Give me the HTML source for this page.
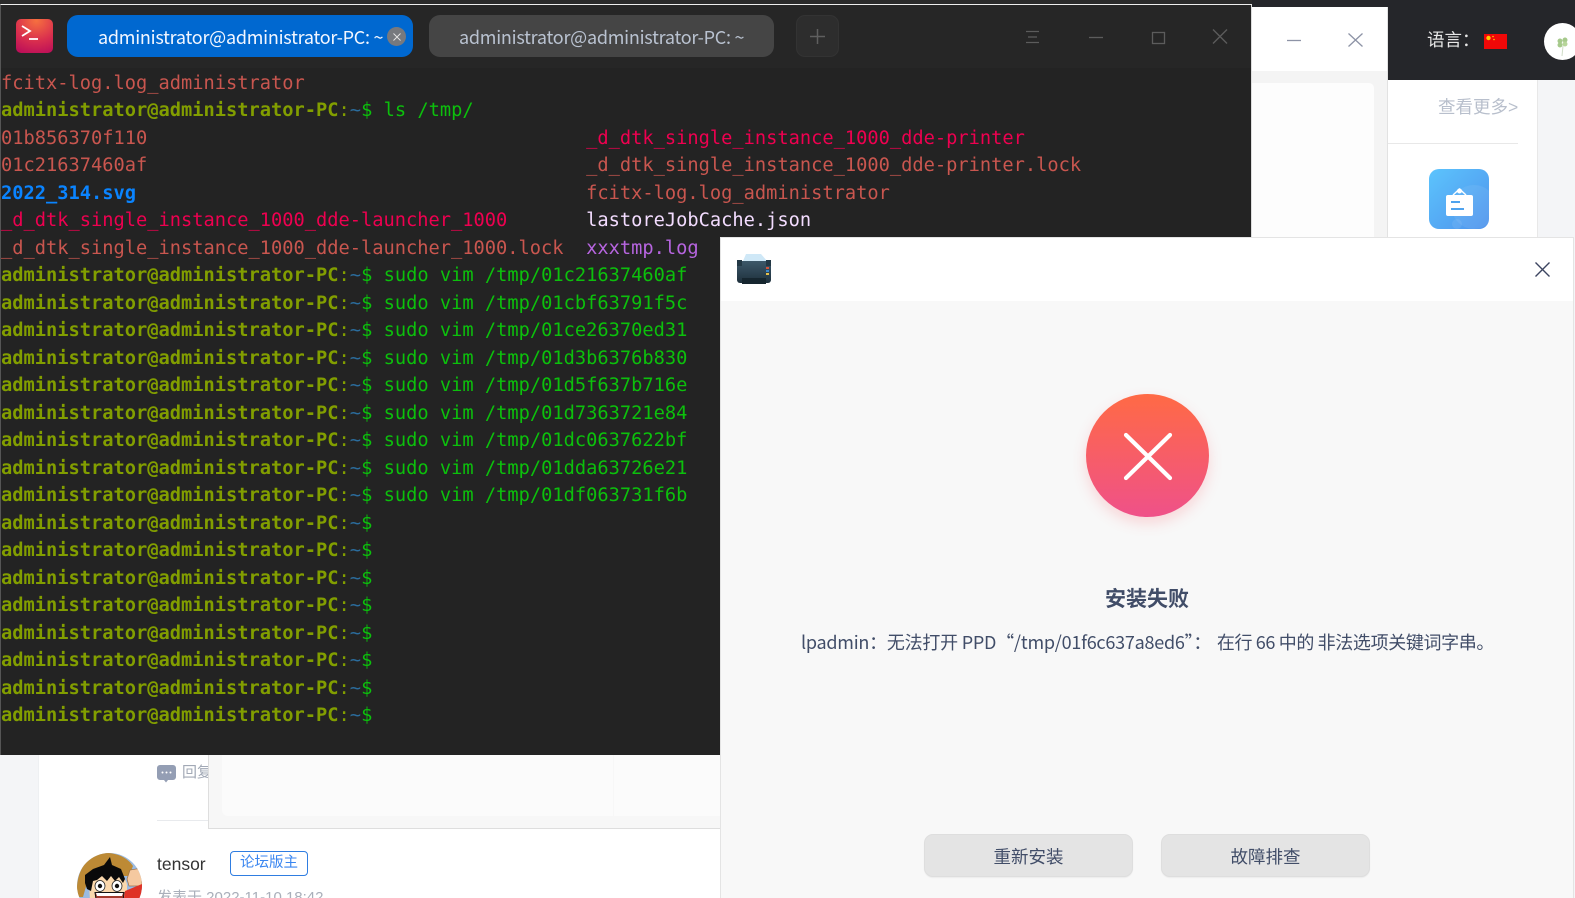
<!DOCTYPE html>
<html lang="zh"><head><meta charset="utf-8"><title>Screenshot</title>
<style>
html,body{margin:0;padding:0;width:1575px;height:898px;overflow:hidden;background:#f4f5f7}
body{position:relative;font-family:"Liberation Sans","Noto Sans CJK SC",sans-serif}
.a{position:absolute;display:block}
svg{position:absolute;display:block;overflow:visible}
pre{position:absolute;left:1px;top:70px;margin:0;font:18.7px/27.49px "DejaVu Sans Mono",monospace;white-space:pre;color:#0cc00c;z-index:1}
.u{color:#829e00;font-weight:bold}.h{color:#829e00}.t{color:#2b6c9c}
.r{color:#c9564f}.p{color:#ee0050}.b{color:#0a84ff;font-weight:bold}.w{color:#f3dcff}.v{color:#b765e0}
.tab{position:absolute;top:15px;height:42px;border-radius:11px;font:18px/44px "Noto Sans CJK SC",sans-serif;letter-spacing:-.25px;white-space:nowrap}
</style></head><body>
<!-- bottom page -->
<div class="a" style="left:38px;top:740px;width:700px;height:158px;background:#fff;border-left:1px solid #eef0f2"></div>
<div class="a" style="left:157px;top:820px;width:60px;height:1px;background:#e8eaed"></div>
<svg style="left:157px;top:765px" width="19" height="18" viewBox="0 0 19 18"><path d="M3 0h13a3 3 0 0 1 3 3v9a3 3 0 0 1-3 3h-5l-2 2.500-2-2.500H3a3 3 0 0 1-3-3V3a3 3 0 0 1 3-3z" fill="#949eb4"/><circle cx="5.500" cy="7.500" r="1" fill="#fff"/><circle cx="9.500" cy="7.500" r="1" fill="#fff"/><circle cx="13.500" cy="7.500" r="1" fill="#fff"/></svg>
<div class="a" style="left:182px;top:762px;width:26px;overflow:hidden;white-space:nowrap;font-size:15px;line-height:22px;color:#a2a9b6">回复</div>
<div class="a" style="left:208px;top:755px;width:512px;height:73px;background:#f7f7f7;border-left:1px solid #dedede;border-bottom:1px solid #dedede"></div>
<div class="a" style="left:222px;top:755px;width:391px;height:61px;background:#fbfbfb;border-radius:0 0 0 6px"></div>
<div class="a" style="left:614px;top:755px;width:106px;height:61px;background:#fbfbfb"></div>
<svg style="left:77px;top:853px" width="65" height="65" viewBox="0 0 65 65">
<defs><clipPath id="av"><circle cx="32.500" cy="32.500" r="32.500"/></clipPath></defs>
<g clip-path="url(#av)"><rect width="65" height="65" fill="#9bbbe2"/>
<path d="M0 36C0 20 8 6 20 1c12-3 28 0 36 12l-4 10H12L6 44H0z" fill="#bd8a35"/>
<path d="M12 30c2-6 10-10 20-10s17 4 18 12v33H14z" fill="#fad8ad"/>
<path d="M8 22l8-6 11-4 6-8 2 8 9 4 4 10-2 4-4-6-4 4-4-5-4 5-5-5-5 4-4 1-2 10-4-2-2-6z" fill="#0a0a0a"/>
<ellipse cx="23" cy="33" rx="5" ry="5.500" fill="#fff" stroke="#222" stroke-width=".8"/><circle cx="23" cy="33" r="2.200" fill="#111"/>
<ellipse cx="40" cy="33" rx="5" ry="5.500" fill="#fff" stroke="#222" stroke-width=".8"/><circle cx="40" cy="33" r="2.200" fill="#111"/>
<path d="M18 39.500h29l-3 26H22z" fill="#a33a2e" stroke="#111"/><path d="M19 40h27l-1 3H20z" fill="#fff"/><path d="M24 52h17l-2 13H26z" fill="#e05b50"/>
<path d="M50 26l3-9 12-2v18l-13 0z" fill="#f5c9a0" stroke="#9b6f45" stroke-width=".7"/>
<path d="M48 38l17-7v34H44z" fill="#df3226"/></g></svg>
<div class="a" style="left:157px;top:852px;font-size:17.5px;line-height:24px;color:#333">tensor</div>
<div class="a" style="left:230px;top:851px;width:76px;height:23px;border:1px solid #2f7de1;border-radius:4px;text-align:center;font-size:14.5px;line-height:23px;color:#3a86f0">论坛版主</div>
<div class="a" style="left:157px;top:890px;font-size:15px;line-height:16px;color:#a9afba;white-space:nowrap">发表于 2022-11-10 18:42</div>

<!-- top-right background -->
<div class="a" style="left:0;top:0;width:1575px;height:80px;background:#25262a"></div>
<div class="a" style="left:0;top:0;width:1252px;height:5px;background:#2a2a2a"></div>
<div class="a" style="left:1388px;top:80px;width:149px;height:157px;background:#fff;border-right:1px solid #e8e8e8"></div>
<div class="a" style="left:1427px;top:28px;font-size:17.5px;line-height:24px;color:#e8e8e8">语言：</div>
<svg style="left:1484px;top:34px" width="23" height="15" viewBox="0 0 23 15"><rect width="23" height="15" fill="#f00808"/><circle cx="4.500" cy="4" r="2.200" fill="#fc0"/><circle cx="9" cy="2.500" r=".8" fill="#fc0"/><circle cx="10" cy="5.500" r=".8" fill="#fc0"/></svg>
<svg style="left:1544px;top:23px" width="37" height="37" viewBox="0 0 37 37"><circle cx="18.500" cy="18.500" r="18.500" fill="#fff"/><circle cx="16" cy="18" r="2.500" fill="#a6c98b"/><circle cx="21" cy="17" r="2.500" fill="#a6c98b"/><circle cx="16" cy="22" r="2.500" fill="#a6c98b"/><circle cx="21" cy="21" r="2.500" fill="#b7d59a"/><path d="M19 23l-1 10" stroke="#cfdcc6"/></svg>
<div class="a" style="left:1438px;top:96px;font-size:17.500px;line-height:22px;color:#b8bfcc;white-space:nowrap">查看更多&gt;</div>
<div class="a" style="left:1388px;top:143px;width:130px;height:1px;background:#e8e8e8"></div>
<svg style="left:1429px;top:169px" width="60" height="60" viewBox="0 0 60 60"><defs><linearGradient id="bl" x1="0" y1="0" x2="1" y2="1"><stop offset="0" stop-color="#5cc4fd"/><stop offset="1" stop-color="#4f93ec"/></linearGradient></defs>
<rect width="60" height="60" rx="10" fill="url(#bl)"/><circle cx="45" cy="38" r="22" fill="#fff" opacity=".07"/><circle cx="28" cy="55" r="5" fill="#fff" opacity=".08"/>
<rect x="17" y="26" width="27" height="21" rx="2" fill="#fff"/><path d="M24 26l6.500-6 6.500 6" fill="none" stroke="#fff" stroke-width="1.500"/><circle cx="30.500" cy="22" r="2.500" fill="#fff"/><rect x="22" y="32" width="9" height="2" fill="#4fa3ee"/><rect x="22" y="39" width="13" height="2" fill="#4fa3ee"/></svg>

<!-- middle window -->
<div class="a" style="left:1251px;top:7px;width:136px;height:64px;background:#fff;border-right:1px solid #e2e2e2"></div>
<div class="a" style="left:1251px;top:71px;width:136px;height:166px;background:#f4f4f4;border-right:1px solid #e2e2e2"></div>
<div class="a" style="left:1251px;top:83px;width:123px;height:154px;background:#fdfdfd;border-radius:0 5px 0 0"></div>
<svg style="left:1287px;top:33px" width="76" height="14" viewBox="0 0 76 14" fill="none" stroke="#8d93a6" stroke-width="1.300"><path d="M0 7.500h14"/><path d="M61.500.5l14 13M75.500.5l-14 13"/></svg>

<!-- terminal -->
<div class="a" style="left:0;top:4px;width:1250px;height:750px;background:#232323;border-top:1px solid #eee;border-left:1px solid #555;border-right:1px solid #ddd;box-sizing:content-box"></div>
<div class="a" style="left:1px;top:5px;width:1250px;height:63px;background:#262626"></div>
<svg style="left:16px;top:19px" width="37" height="34" viewBox="0 0 37 34"><defs><radialGradient id="ti" cx=".55" cy=".05" r="1"><stop offset="0" stop-color="#f6703f"/><stop offset=".6" stop-color="#d92e4e"/><stop offset="1" stop-color="#bd1058"/></radialGradient></defs><rect width="37" height="34" rx="5" fill="url(#ti)"/><path d="M6 7l8 5-8 5" fill="none" stroke="#fff" stroke-width="1.800"/><path d="M13 20h9" stroke="#fff" stroke-width="1.800"/></svg>
<div class="tab" style="left:67px;width:346px;background:#0068d0;color:#f2f6ff"><span style="position:absolute;left:31px">administrator@administrator-PC: ~</span></div>
<div class="a" style="left:387px;top:27px;width:19px;height:19px;border-radius:50%;background:#77797e"></div>
<svg style="left:392.500px;top:32.500px" width="8" height="8" viewBox="0 0 8 8" stroke="#e6e6e6" stroke-width=".9"><path d="M.5.5l7 7M7.500.5l-7 7"/></svg>
<div class="tab" style="left:429px;width:345px;background:#454545;color:#b9c2d0"><span style="position:absolute;left:30px">administrator@administrator-PC: ~</span></div>
<div class="a" style="left:796px;top:15px;width:43px;height:42px;border-radius:9px;background:#2d2d2d;border:1px solid #333;box-sizing:border-box"></div>
<svg style="left:810px;top:29px" width="15" height="15" viewBox="0 0 15 15" stroke="#5f5f5f" stroke-width="1.500"><path d="M7.500 0v15M0 7.500h15"/></svg>
<svg style="left:1026px;top:29px" width="202" height="15" viewBox="0 0 202 15" fill="none" stroke="#5c5c5c" stroke-width="1.300"><path d="M0 2.500h13M2 8h9M0 13.500h13"/><path d="M63 8.500h14"/><rect x="126.500" y="3.500" width="12" height="11"/><path d="M187 .5l14 14M201 .5l-14 14"/></svg>
<pre><span class="r">fcitx-log.log_administrator</span>
<span class="u">administrator@administrator-PC</span><span class="h">:</span><span class="t">~</span>$ ls /tmp/
<span class="r">01b856370f110</span>                                       <span class="p">_d_dtk_single_instance_1000_dde-printer</span>
<span class="r">01c21637460af</span>                                       <span class="r">_d_dtk_single_instance_1000_dde-printer.lock</span>
<span class="b">2022_314.svg</span>                                        <span class="r">fcitx-log.log_administrator</span>
<span class="p">_d_dtk_single_instance_1000_dde-launcher_1000</span>       <span class="w">lastoreJobCache.json</span>
<span class="r">_d_dtk_single_instance_1000_dde-launcher_1000.lock</span>  <span class="v">xxxtmp.log</span>
<span class="u">administrator@administrator-PC</span><span class="h">:</span><span class="t">~</span>$ sudo vim /tmp/01c21637460af
<span class="u">administrator@administrator-PC</span><span class="h">:</span><span class="t">~</span>$ sudo vim /tmp/01cbf63791f5c
<span class="u">administrator@administrator-PC</span><span class="h">:</span><span class="t">~</span>$ sudo vim /tmp/01ce26370ed31
<span class="u">administrator@administrator-PC</span><span class="h">:</span><span class="t">~</span>$ sudo vim /tmp/01d3b6376b830
<span class="u">administrator@administrator-PC</span><span class="h">:</span><span class="t">~</span>$ sudo vim /tmp/01d5f637b716e
<span class="u">administrator@administrator-PC</span><span class="h">:</span><span class="t">~</span>$ sudo vim /tmp/01d7363721e84
<span class="u">administrator@administrator-PC</span><span class="h">:</span><span class="t">~</span>$ sudo vim /tmp/01dc0637622bf
<span class="u">administrator@administrator-PC</span><span class="h">:</span><span class="t">~</span>$ sudo vim /tmp/01dda63726e21
<span class="u">administrator@administrator-PC</span><span class="h">:</span><span class="t">~</span>$ sudo vim /tmp/01df063731f6b
<span class="u">administrator@administrator-PC</span><span class="h">:</span><span class="t">~</span>$
<span class="u">administrator@administrator-PC</span><span class="h">:</span><span class="t">~</span>$
<span class="u">administrator@administrator-PC</span><span class="h">:</span><span class="t">~</span>$
<span class="u">administrator@administrator-PC</span><span class="h">:</span><span class="t">~</span>$
<span class="u">administrator@administrator-PC</span><span class="h">:</span><span class="t">~</span>$
<span class="u">administrator@administrator-PC</span><span class="h">:</span><span class="t">~</span>$
<span class="u">administrator@administrator-PC</span><span class="h">:</span><span class="t">~</span>$
<span class="u">administrator@administrator-PC</span><span class="h">:</span><span class="t">~</span>$</pre>

<!-- dialog -->
<div class="a" style="left:720px;top:237px;width:854px;height:661px;background:#f8f8f8;border-left:1px solid #e4e4e4;border-right:1px solid #e4e4e4;border-top:1px solid #e4e4e4;box-sizing:border-box;z-index:2">
<div class="a" style="left:0;top:0;width:852px;height:63px;background:#fff"></div>
</div>
<svg style="left:737px;top:252px;z-index:3" width="34" height="33" viewBox="0 0 34 33"><defs><linearGradient id="pr" x1="0" y1="0" x2="0" y2="1"><stop offset="0" stop-color="#3d5869"/><stop offset="1" stop-color="#1e303c"/></linearGradient></defs><path d="M6 9L9 2h15l6 7z" fill="#cfe8f7"/><rect x="0" y="9" width="34" height="22" rx="3" fill="url(#pr)"/><rect x="0" y="8" width="5" height="6" fill="#233845"/><rect x="29" y="8" width="5" height="6" fill="#233845"/><rect x="5" y="26" width="24" height="6" fill="#16262f"/><rect x="29" y="15" width="3" height="2" fill="#d3513a"/><rect x="29" y="18" width="3" height="2" fill="#3a86c9"/><rect x="29" y="21" width="3" height="2" fill="#e5c04a"/></svg>
<svg style="left:1535px;top:262px;z-index:3" width="15" height="15" viewBox="0 0 15 15" stroke="#3c4560" stroke-width="1.400"><path d="M.5.500l14 14M14.500.500l-14 14"/></svg>
<div class="a" style="left:1086px;top:394px;width:123px;height:123px;border-radius:50%;background:linear-gradient(180deg,#ff6a45,#ef5189);box-shadow:0 6px 14px rgba(250,90,100,.22);z-index:3"></div>
<svg style="left:1124px;top:433px;z-index:4" width="48" height="47" viewBox="0 0 48 47" stroke="#fff" stroke-width="4.200" stroke-linecap="round"><path d="M2 2l44 43M46 2L2 45"/></svg>
<div class="a" style="left:1087px;top:583px;width:120px;text-align:center;font:bold 21px/30px 'Noto Sans CJK SC',sans-serif;color:#414d68;z-index:3">安装失败</div>
<div class="a" style="left:801px;top:629px;width:700px;font:18px/26px 'Noto Sans CJK SC',sans-serif;letter-spacing:-.245px;color:#414d68;white-space:nowrap;z-index:3">lpadmin：无法打开 PPD“/tmp/01f6c637a8ed6”：<span style="margin-left:2px;letter-spacing:-.36px"> 在行 66 中的 非法选项关键词字串。</span></div>
<div class="a" style="left:924px;top:834px;width:209px;height:43px;border-radius:9px;background:#e4e4e4;border:1px solid #dedede;box-sizing:border-box;box-shadow:0 1px 1px rgba(0,0,0,.05);text-align:center;font:17.5px/43px 'Noto Sans CJK SC',sans-serif;color:#414d68;z-index:3">重新安装</div>
<div class="a" style="left:1161px;top:834px;width:209px;height:43px;border-radius:9px;background:#e4e4e4;border:1px solid #dedede;box-sizing:border-box;box-shadow:0 1px 1px rgba(0,0,0,.05);text-align:center;font:17.5px/43px 'Noto Sans CJK SC',sans-serif;color:#414d68;z-index:3">故障排查</div>
</body></html>
